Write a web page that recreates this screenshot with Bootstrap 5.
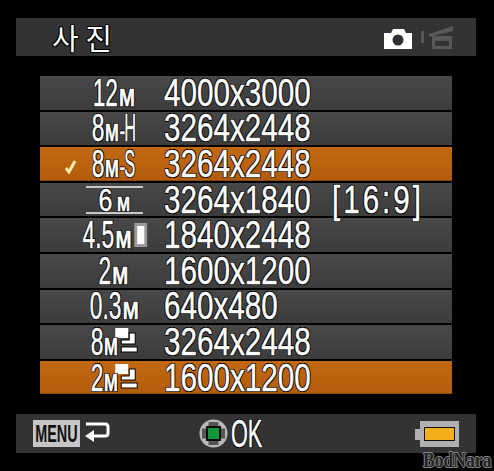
<!DOCTYPE html>
<html lang="en">

<head>
    <meta charset="UTF-8">
    <title>사진</title>
    <link href="https://cdn.jsdelivr.net/npm/bootstrap@5.3.0/dist/css/bootstrap.min.css" rel="stylesheet">
    <style>
        html, body { background: #000; height: 471px; overflow: hidden; }
        .cam-screen { position: relative; width: 494px; height: 471px; padding-top: 18px; font-family: "Liberation Sans", sans-serif; color: #fff; }
        .osd-text { -webkit-text-stroke: .5px #fff; text-shadow: -1px 0 0 #000, 1px 0 0 #000, 0 -1px 0 #000, 0 1px 0 #000, -1px -1px 0 #000, 1px 1px 0 #000, -1px 1px 0 #000, 1px -1px 0 #000; }
        .title-bar { height: 38px; margin: 0 18px 0 16px; background: #333; }
        .title-text { font-family: "Noto Sans CJK KR", "Liberation Sans", sans-serif; font-size: 29px; line-height: 1; margin-left: 36px; -webkit-text-stroke: 0; }
        .mode-icons { margin-right: 22px; gap: 9px; }
        .size-list { margin: 20px 42px 0 40px; gap: 2px; }
        .size-row { height: 33.6px; background: linear-gradient(#484848, #3c3c3c); font-size: 38px; line-height: 1; }
        .size-row.picked { background: linear-gradient(#c26810, #b35c0b); box-shadow: inset 0 -1px 0 #8d4a0a; }
        .tick-cell { width: 48px; padding-left: 24px; flex: none; }
        /* size column is centred on x = 114.5 */
        .size-cell { width: 53px; flex: none; white-space: nowrap; display: flex; justify-content: center; align-items: center; }
        .size-txt { flex: none; display: flex; align-items: baseline; transform: scaleX(.6); transform-origin: center; }
        .res-cell { margin-left: 23px; width: 168px; flex: none; }
        .res-txt { display: inline-block; transform: scaleX(.78); transform-origin: left center; }
        .ratio-txt { letter-spacing: 3.8px; }
        .unit-m { display: inline-block; width: 29px; margin-left: 2px; font-size: 24px; font-weight: 700; }
        .unit-m b { display: inline-block; font-weight: 700; transform: scaleX(1.33); transform-origin: left center; }
        .unit-m.tight { width: 24px; margin-left: 1px; }
        .unit-m.tight b { transform: scaleX(1.15); }
        .tail-ch { display: inline-block; width: 20px; transform: scaleX(.72); transform-origin: left center; }
        .dash-ch { display: inline-block; width: 8px; font-size: 30px; }
        .rule-lines { border-top: 2px solid #c8c8c8; border-bottom: 2px solid #c8c8c8; width: 57px; height: 28px; flex: none; display: flex; justify-content: center; align-items: center; }
        .rule-lines .size-txt { font-size: 32px; transform: scaleX(.78); }
        .rule-lines .unit-m { width: 17px; margin-left: 6px; font-size: 20px; }
        .rule-lines .unit-m b { transform: none; }
        .portrait-mark { flex: none; align-self: center; margin-left: 2px; }
        .burst-mark { flex: none; align-self: center; margin-left: -7px; }
        .foot-bar { height: 39px; margin: 20px 18px 0 16px; background: #333; padding: 0 17px; }
        .menu-tag { width: 47px; height: 27px; background: #c6c6c6; color: #111; font-weight: 700; font-size: 24px; line-height: 27px; display: flex; justify-content: center; overflow: hidden; }
        .menu-txt { flex: none; transform: scaleX(.6); }
        .ok-group { margin-left: 88px; font-size: 38px; line-height: 1; gap: 3px; }
        .ok-txt { display: inline-block; transform: scaleX(.57); transform-origin: left center; }
        .batt-icon { position: absolute; left: 415px; top: 421px; }
        .site-mark { position: absolute; left: 423px; top: 450px; font-family: "Liberation Serif", serif; font-weight: 700; font-size: 20px; line-height: 1; color: #222; transform: scaleX(.88); transform-origin: left center; text-shadow: -1px 0 0 #8a8a8a, 1px 0 0 #8a8a8a, 0 -1px 0 #8a8a8a, 0 1px 0 #8a8a8a; }
    </style>
</head>

<body>
    <div class="cam-screen">
        <!-- Заголовок -->
        <div class="title-bar d-flex align-items-center justify-content-between">
            <div class="title-text osd-text">사 진</div>
            <div class="mode-icons d-flex align-items-end">
                <svg width="28" height="21" viewBox="0 0 28 21"><path d="M0 5h7l2-4h11l2 4h6v16H0z" fill="#fff"/><circle cx="14" cy="12" r="5.500" fill="#2b3038"/></svg>
                <svg width="33" height="24" viewBox="0 0 33 24" fill="#585858"><path d="M0 6h3v12H0z"/><path d="M8 9l24-8v5L8 12z"/><path fill-rule="evenodd" d="M11 11h20v13H11zm3 5v5h14v-5z"/></svg>
            </div>
        </div>

        <!-- Список размеров -->
        <div id="sizeList" class="size-list d-flex flex-column"></div>

        <!-- Нижняя панель -->
        <div class="foot-bar d-flex align-items-center">
            <div class="menu-tag"><span class="menu-txt">MENU</span></div>
            <svg class="ms-1" width="27" height="25" viewBox="0 0 27 25" fill="none" stroke="#fff" stroke-width="3"><path d="M2 3h19q3 0 3 3v6q0 3-3 3H9"/><path d="M10 9v12L1 15z" fill="#fff" stroke="none"/></svg>
            <div class="ok-group d-flex align-items-center osd-text">
                <svg width="29" height="29" viewBox="0 0 29 29"><circle cx="14.500" cy="14.500" r="14" fill="#b8b8bc"/><path d="M9.500 3h10v6.500H26v10h-6.500V26h-10v-6.500H3v-10h6.500z" fill="#555"/><rect x="7" y="7" width="15" height="15" fill="#0d0d0d"/><rect x="9" y="9" width="11" height="11" fill="#11963a"/></svg>
                <span class="ok-txt">OK</span>
            </div>
            <svg class="batt-icon" width="44" height="26" viewBox="0 0 44 26"><path d="M5 0h39v26H5v-7H0V8h5z" fill="#b0b0b0"/><rect x="9" y="6" width="31" height="14" fill="#111"/><rect x="10" y="7" width="29" height="12" fill="#f2ae1c"/></svg>
        </div>

        <div class="site-mark">BodNara</div>
    </div>

    <script>
        const burstIcon = '<svg class="burst-mark" width="40" height="27" viewBox="0 0 24 27" preserveAspectRatio="none"><path d="M1 0h13v10H1z" fill="#fff"/><path d="M15 5h6v11H7v-4h8z" fill="#fff" stroke="#000"/><path d="M7 19h16v5H7z" fill="#fff" stroke="#000"/></svg>';
        const portraitIcon = '<svg class="portrait-mark" width="22" height="24" viewBox="0 0 13 24" preserveAspectRatio="none"><rect x="1.500" y="1.500" width="10" height="21" fill="#fff" stroke="#9a9a9a" stroke-width="3"/></svg>';
        const unitM = '<span class="unit-m"><b>M</b></span>';
        const unitTight = '<span class="unit-m tight"><b>M</b></span>';

        const sizes = [
            { label: `12${unitM}`, res: '4000x3000' },
            { label: `8${unitTight}<span class="dash-ch">-</span><span class="tail-ch">H</span>`, res: '3264x2448' },
            { label: `8${unitTight}<span class="dash-ch">-</span><span class="tail-ch">S</span>`, res: '3264x2448', picked: true, tick: true },
            { label: `6${unitM}`, res: '3264x1840', ratio: '[16:9]', ruled: true },
            { label: `4.5${unitM}${portraitIcon}`, res: '1840x2448' },
            { label: `2${unitM}`, res: '1600x1200' },
            { label: `0.3${unitM}`, res: '640x480' },
            { label: `8${unitTight}${burstIcon}`, res: '3264x2448' },
            { label: `2${unitTight}${burstIcon}`, res: '1600x1200', picked: true }
        ];

        const list = document.getElementById('sizeList');
        sizes.forEach(item => {
            const row = document.createElement('div');
            row.className = 'size-row osd-text d-flex align-items-center' + (item.picked ? ' picked' : '');
            const sizeTxt = `<span class="size-txt">${item.label}</span>`;
            row.innerHTML = `
                <div class="tick-cell">${item.tick ? '<svg width="14" height="14" viewBox="0 0 14 14" fill="none" stroke="#ffe9a8" stroke-width="3"><path d="M2 8l3 4 6-11"/></svg>' : ''}</div>
                <div class="size-cell">${item.ruled ? `<span class="rule-lines">${sizeTxt}</span>` : sizeTxt}</div>
                <div class="res-cell"><span class="res-txt">${item.res}</span></div>
                ${item.ratio ? `<div><span class="res-txt ratio-txt">${item.ratio}</span></div>` : ''}`;
            list.appendChild(row);
        });
    </script>
    <script src="https://cdn.jsdelivr.net/npm/bootstrap@5.3.0/dist/js/bootstrap.bundle.min.js"></script>
</body>

</html>
